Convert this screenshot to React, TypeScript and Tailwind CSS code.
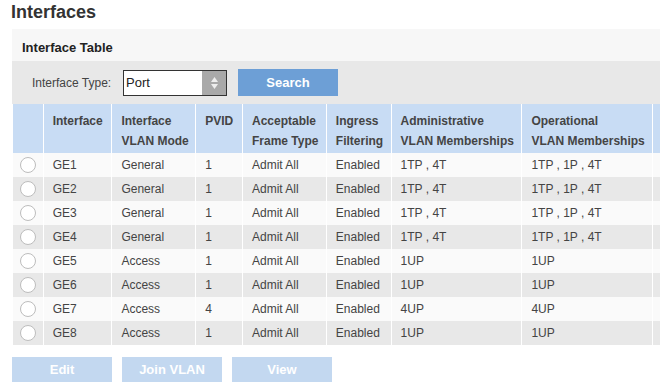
import { useState } from 'react';

const rows = [
    { name: "GE1", mode: "General", pvid: "1", frame: "Admit All", ingress: "Enabled", admin: "1TP , 4T", oper: "1TP , 1P , 4T" },
    { name: "GE2", mode: "General", pvid: "1", frame: "Admit All", ingress: "Enabled", admin: "1TP , 4T", oper: "1TP , 1P , 4T" },
    { name: "GE3", mode: "General", pvid: "1", frame: "Admit All", ingress: "Enabled", admin: "1TP , 4T", oper: "1TP , 1P , 4T" },
    { name: "GE4", mode: "General", pvid: "1", frame: "Admit All", ingress: "Enabled", admin: "1TP , 4T", oper: "1TP , 1P , 4T" },
    { name: "GE5", mode: "Access", pvid: "1", frame: "Admit All", ingress: "Enabled", admin: "1UP", oper: "1UP" },
    { name: "GE6", mode: "Access", pvid: "1", frame: "Admit All", ingress: "Enabled", admin: "1UP", oper: "1UP" },
    { name: "GE7", mode: "Access", pvid: "4", frame: "Admit All", ingress: "Enabled", admin: "4UP", oper: "4UP" },
    { name: "GE8", mode: "Access", pvid: "1", frame: "Admit All", ingress: "Enabled", admin: "1UP", oper: "1UP" },
]

const headers = [
    { w: "w-[31px]", lines: [] as string[] },
    { w: "w-[69px]", lines: ["Interface"] },
    { w: "w-[84px]", lines: ["Interface", "VLAN Mode"] },
    { w: "w-[47px]", lines: ["PVID"] },
    { w: "w-[84px]", lines: ["Acceptable", "Frame Type"] },
    { w: "w-[65px]", lines: ["Ingress", "Filtering"] },
    { w: "w-[131px]", lines: ["Administrative", "VLAN Memberships"] },
    { w: "w-[131px]", lines: ["Operational", "VLAN Memberships"] },
    { w: "w-[60px]", lines: [] as string[] },
]

function App() {
    const [type, setType] = useState<string>("Port");
    const [selected, setSelected] = useState<number | null>(null);

    return (
        <div className="w-[660px] h-[387px] overflow-hidden bg-white text-[#333] font-['Liberation_Sans',Arial,sans-serif]">
            <h1 className="pl-[11px] pt-[1px] h-[29px] text-[18px] font-bold leading-[22px] text-[#333]">Interfaces</h1>
            <div className="ml-[12px] w-[700px]">
                <div className="h-[32px] bg-[#f7f7f7] pl-[10px] flex items-center">
                    <h2 className="text-[13px] font-bold text-[#222] pt-[6px]">Interface Table</h2>
                </div>
                <div className="h-[43px] bg-[#e8e8e8] flex items-center pl-[20px]">
                    <span className="text-[12px] text-[#444] w-[91px]">Interface Type:</span>
                    <div className="relative w-[104px] h-[26px] border border-[#333] bg-white flex items-center">
                        <select
                            value={type}
                            onChange={(e) => setType(e.target.value)}
                            className="appearance-none w-full h-full pl-[2px] text-[13px] text-[#222] bg-transparent outline-none"
                        >
                            <option>Port</option>
                            <option>LAG</option>
                        </select>
                        <div className="absolute right-0 top-0 h-full w-[24px] bg-[#a9a9a9] flex flex-col items-center justify-center gap-[2px] pointer-events-none">
                            <svg width="7" height="5" viewBox="0 0 7 5"><path d="M3.5 0L7 5H0z" fill="#eee" /></svg>
                            <svg width="7" height="5" viewBox="0 0 7 5"><path d="M0 0h7L3.5 5z" fill="#eee" /></svg>
                        </div>
                    </div>
                    <button className="ml-[11px] w-[100px] h-[27px] bg-[#6d9fd6] text-white text-[13px] font-bold">Search</button>
                </div>
                <table className="border-collapse table-fixed text-[12px] text-[#444]">
                    <thead>
                        <tr className="bg-[#c8dcf4] h-[49px]">
                            {headers.map((h, i) => (
                                <th key={i} className={`${h.w} border-x border-white align-top text-left font-bold pl-[9px] pt-[7px] leading-[20px]`}>
                                    {h.lines.map((l, j) => <div key={j} className="whitespace-nowrap">{l}</div>)}
                                </th>
                            ))}
                        </tr>
                    </thead>
                    <tbody>
                        {rows.map((r, i) => (
                            <tr key={i} className={`h-[24px] ${i % 2 === 0 ? 'bg-[#fafafa]' : 'bg-[#e8e8e8]'}`}>
                                <td className="border-x border-white">
                                    <div className="flex justify-center">
                                        <button
                                            onClick={() => setSelected(i)}
                                            className="w-[16px] h-[16px] rounded-full border border-[#bdbdbd] bg-white flex items-center justify-center"
                                        >
                                            {selected === i && <span className="w-[7px] h-[7px] rounded-full bg-[#444]" />}
                                        </button>
                                    </div>
                                </td>
                                <td className="border-x border-white pl-[9px]">{r.name}</td>
                                <td className="border-x border-white pl-[9px]">{r.mode}</td>
                                <td className="border-x border-white pl-[9px]">{r.pvid}</td>
                                <td className="border-x border-white pl-[9px]">{r.frame}</td>
                                <td className="border-x border-white pl-[9px]">{r.ingress}</td>
                                <td className="border-x border-white pl-[9px] whitespace-nowrap">{r.admin}</td>
                                <td className="border-x border-white pl-[9px] whitespace-nowrap">{r.oper}</td>
                                <td className="border-x border-white"></td>
                            </tr>
                        ))}
                    </tbody>
                </table>
                <div className="flex gap-[10px] mt-[12px]">
                    <button disabled className="w-[100px] h-[25px] bg-[#c3d8f0] text-white text-[13px] font-bold">Edit</button>
                    <button disabled className="w-[100px] h-[25px] bg-[#c3d8f0] text-white text-[13px] font-bold">Join VLAN</button>
                    <button disabled className="w-[100px] h-[25px] bg-[#c3d8f0] text-white text-[13px] font-bold">View</button>
                </div>
            </div>
        </div>
    )
}

export default App
